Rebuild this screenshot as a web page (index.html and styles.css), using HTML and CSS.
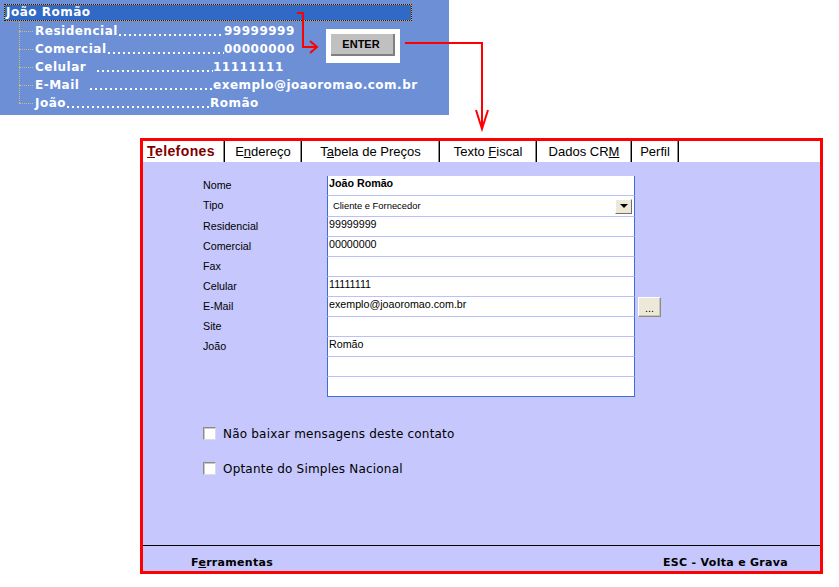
FILE: index.html
```html
<!DOCTYPE html>
<html lang="pt-BR">
<head>
    <meta charset="UTF-8">
    <title>Contato - Telefones</title>
    <link rel="stylesheet" href="styles.css">
</head>
<body>
    <div class="tree-panel">
        <div class="tree-root">João Romão</div>
        <ul class="tree-list">
            <li><span class="key"><span>Residencial</span><span class="dots"></span></span>99999999</li>
            <li><span class="key"><span>Comercial</span><span class="dots"></span></span>00000000</li>
            <li><span class="key mid"><span>Celular&nbsp;&nbsp;</span><span class="dots"></span></span>11111111</li>
            <li><span class="key mid"><span>E-Mail&nbsp;&nbsp;</span><span class="dots"></span></span>exemplo@joaoromao.com.br</li>
            <li><span class="key short"><span>João</span><span class="dots"></span></span>Romão</li>
        </ul>

        <div class="enter-box">
            <span class="enter-btn">ENTER</span>
        </div>
    </div>

    <!-- setas vermelhas -->
    <svg class="connectors" width="839" height="140" viewBox="0 0 839 140">
        <g fill="none" stroke="#ff0000" stroke-width="2">
            <polyline points="297,13 303,13 303,47 317,47"/>
            <polyline points="310,41 317,47 310,53"/>
            <polyline points="405,43 482,43 482,128"/>
            <polyline points="476,110 482,129 488,110"/>
        </g>
    </svg>

    <div class="window">
        <div class="tabs">
            <div class="tab active"><u>T</u>elefones</div>
            <div class="tab">E<u>n</u>dereço</div>
            <div class="tab">T<u>a</u>bela de Preços</div>
            <div class="tab">Texto <u>F</u>iscal</div>
            <div class="tab">Dados CR<u>M</u></div>
            <div class="tab">Perfil</div>
        </div>

        <div class="tab-body">
            <div class="form">
                <div class="lbl">Nome</div>
                <div class="cell strong">João Romão</div>

                <div class="lbl">Tipo</div>
                <div class="cell select">
                    <span>Cliente e Fornecedor</span>
                    <span class="drop"></span>
                </div>

                <div class="lbl">Residencial</div>
                <div class="cell">99999999</div>

                <div class="lbl">Comercial</div>
                <div class="cell">00000000</div>

                <div class="lbl">Fax</div>
                <div class="cell"></div>

                <div class="lbl">Celular</div>
                <div class="cell">11111111</div>

                <div class="lbl">E-Mail</div>
                <div class="cell">exemplo@joaoromao.com.br</div>
                <button type="button" class="more">...</button>

                <div class="lbl">Site</div>
                <div class="cell"></div>

                <div class="lbl">João</div>
                <div class="cell">Romão</div>

                <div class="lbl"></div>
                <div class="cell"></div>

                <div class="lbl"></div>
                <div class="cell last"></div>
            </div>

            <label class="check"><span class="box"></span>Não baixar mensagens deste contato</label>
            <label class="check"><span class="box"></span>Optante do Simples Nacional</label>
        </div>

        <div class="footer">
            <span>F<u>e</u>rramentas</span>
            <span>ESC - Volta e Grava</span>
        </div>
    </div>
</body>
</html>
```

FILE: styles.css
```css
* {
    margin: 0;
    padding: 0;
    box-sizing: border-box;
}

body {
    position: relative;
    width: 839px;
    height: 587px;
    overflow: hidden;
    background: #fff;
    color: #000;
    font-family: "Liberation Sans", Arial, sans-serif;
}

/* arvore azul */
.tree-panel {
    position: relative;
    width: 449px;
    height: 115px;
    padding: 4px 0 0 4px;
    background-color: #6d8fd6;
    color: #fff;
    font-family: "DejaVu Sans", sans-serif;
    font-weight: bold;
    font-size: 12px;
    letter-spacing: 0.5px;
}

.tree-root {
    width: 408px;
    height: 17px;
    padding-left: 2px;
    line-height: 17px;
    background-color: #3169c6;
    box-shadow: inset 0 0 0 1px #e8a03c;
    outline: 1px dotted #1a1a1a;
    outline-offset: -1px;
}

.tree-list {
    position: relative;
    list-style: none;
    margin-top: 1px;
    padding-left: 31px;
}

.tree-list::before {
    content: "";
    position: absolute;
    left: 15px;
    top: 0;
    bottom: 9px;
    border-left: 1px dotted #d2bb7d;
}

.tree-list li {
    position: relative;
    display: flex;
    height: 18px;
    line-height: 18px;
    white-space: nowrap;
}

.tree-list li::before {
    content: "";
    position: absolute;
    left: -16px;
    top: 9px;
    width: 14px;
    border-top: 1px dotted #d2bb7d;
}

.key {
    display: flex;
    width: 189px;
}

.key.mid {
    width: 178px;
}

.key.short {
    width: 175px;
}

/* pontilhado entre nome e valor */
.dots {
    flex: 1;
    background-image: linear-gradient(to right, #fff 2px, transparent 2px);
    background-size: 5px 2px;
    background-position: 1px 12px;
    background-repeat: repeat-x;
}

.enter-box {
    position: absolute;
    left: 326px;
    top: 29px;
    width: 74px;
    height: 34px;
    padding: 5px 0 0 5px;
    background: #fff;
}

.enter-btn {
    display: block;
    width: 64px;
    height: 22px;
    padding-right: 4px;
    background: #c0c0c0;
    box-shadow: inset -2px -2px #808080;
    color: #000;
    font-family: "Liberation Sans", Arial, sans-serif;
    font-size: 11px;
    letter-spacing: 0;
    line-height: 20px;
    text-align: center;
}

.connectors {
    position: absolute;
    left: 0;
    top: 0;
    pointer-events: none;
}

/* janela */
.window {
    display: flex;
    flex-direction: column;
    width: 683px;
    height: 436px;
    margin: 23px 0 0 140px;
    border: 3px solid #ff0000;
    background: #fff;
}

.tabs {
    display: grid;
    grid-template-columns: 82px 77px 138px 97px 95px 47px;
    height: 21px;
}

.tab {
    border-right: 1px solid #000;
    box-shadow: inset -1px 0 #8c8c8c;
    font-size: 13px;
    line-height: 21px;
    text-align: center;
    white-space: nowrap;
}

.tab.active {
    padding-right: 5px;
    color: #800000;
    font-weight: bold;
    font-size: 14px;
    letter-spacing: 0.4px;
}

.tab-body {
    flex: 1;
    padding: 14px 0 0 60px;
    background: #c6c7fc;
}

.form {
    display: grid;
    grid-template-columns: 124px 308px auto;
    grid-template-rows: 20px 21px repeat(9, 20px);
    font-size: 10.7px;
}

.lbl {
    grid-column: 1;
    line-height: 18px;
}

.cell {
    grid-column: 2;
    padding-left: 1px;
    background: #fff;
    border-left: 1px solid #3c6fd9;
    border-right: 1px solid #3c6fd9;
    border-bottom: 1px solid #bcc0fa;
    line-height: 14px;
    white-space: nowrap;
}

.cell.last {
    border-bottom-color: #3c6fd9;
}

.cell.strong {
    font-weight: bold;
}

.cell.select {
    display: flex;
    justify-content: space-between;
    align-items: center;
    padding: 0 2px 0 5px;
    font-size: 9.4px;
}

.drop {
    display: flex;
    align-items: center;
    justify-content: center;
    width: 17px;
    height: 15px;
    background: #ece9d8;
    border: 1px solid;
    border-color: #fff #716f64 #716f64 #fff;
}

.drop::after {
    content: "";
    border-left: 4px solid transparent;
    border-right: 4px solid transparent;
    border-top: 4px solid #000;
}

.more {
    grid-column: 3;
    width: 23px;
    height: 20px;
    margin-left: 3px;
    background: #ece9d8;
    border: 1px solid;
    border-color: #fff #8e8c80 #8e8c80 #fff;
    box-shadow: inset -1px -1px #c7c4b5;
    font-family: "Liberation Sans", Arial, sans-serif;
    font-size: 11px;
    line-height: 20px;
    color: #000;
}

.check {
    display: flex;
    align-items: center;
    gap: 7px;
    height: 13px;
    margin-top: 30px;
    font-family: "DejaVu Sans", sans-serif;
    font-size: 12px;
    letter-spacing: 0.2px;
}

.check + .check {
    margin-top: 22px;
}

.box {
    width: 13px;
    height: 13px;
    background: #fff;
    border: 1px solid;
    border-color: #8a8a8a #dcdcdc #dcdcdc #8a8a8a;
    box-shadow: inset 1px 1px #c8c8c8;
}

.footer {
    display: flex;
    justify-content: space-between;
    align-items: center;
    height: 26px;
    padding: 7px 32px 0 48px;
    border-top: 1px solid #000;
    background: #c6c7fc;
    font-family: "DejaVu Sans", sans-serif;
    font-weight: bold;
    font-size: 11px;
    letter-spacing: 0.3px;
}
```
